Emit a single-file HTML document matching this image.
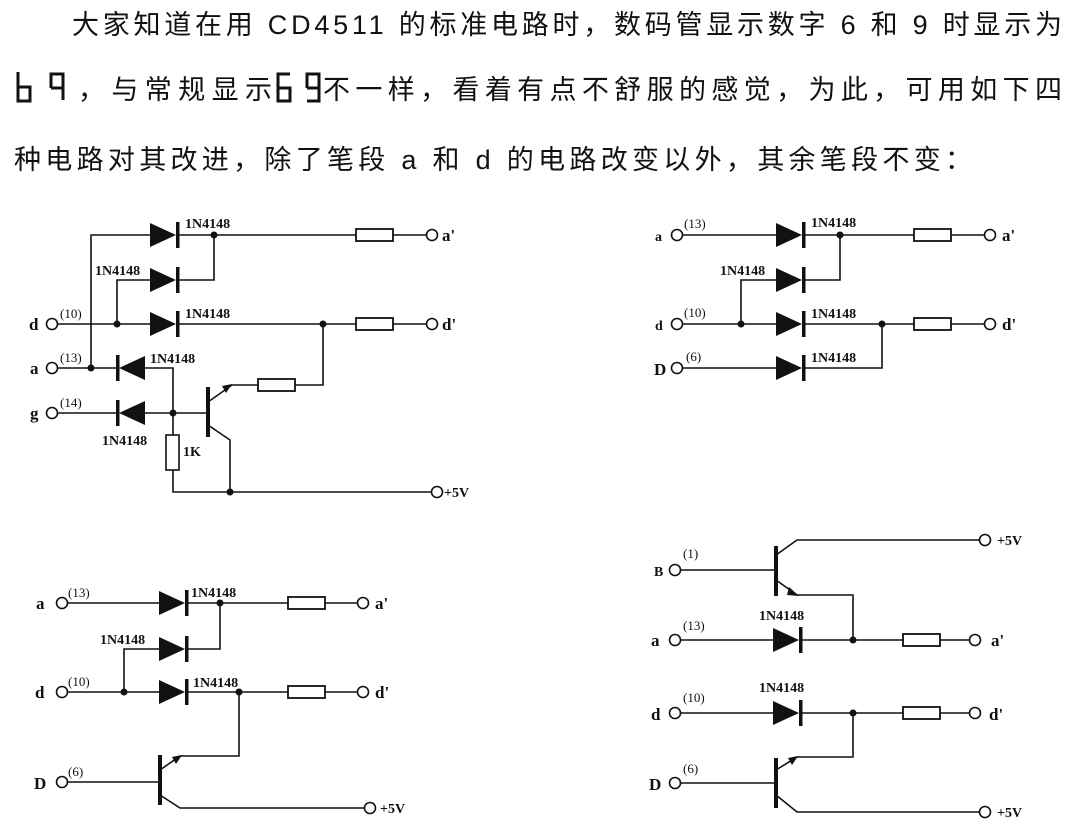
<!DOCTYPE html>
<html><head><meta charset="utf-8"><style>
html,body{margin:0;padding:0;background:#fff;width:1070px;height:835px;overflow:hidden}
svg{display:block}
.t{font-family:"Liberation Sans","Noto Sans CJK SC",sans-serif;font-size:27px;fill:#111}
.l{font-family:"Liberation Serif",serif;font-size:14px;font-weight:bold;fill:#111}
.b{font-family:"Liberation Serif",serif;font-size:17px;font-weight:bold;fill:#111}
.s{font-family:"Liberation Serif",serif;font-size:13px;fill:#111}
.w{stroke:#111;stroke-width:1.6;fill:none}
.seg{stroke:#111;stroke-width:3;fill:none}
</style></head><body>
<svg width="1070" height="835" viewBox="0 0 1070 835" xmlns="http://www.w3.org/2000/svg">
<defs>
<g id="dr"><polygon points="0,-12 26,0 0,12" fill="#111"/><rect x="26" y="-13" width="3.5" height="26" fill="#111"/></g>
<g id="dl"><polygon points="29,-12 3,0 29,12" fill="#111"/><rect x="0" y="-13" width="3.5" height="26" fill="#111"/></g>
<g id="r"><rect x="0" y="-6" width="37" height="12" fill="#fff" stroke="#111" stroke-width="1.8"/></g>
<g id="o"><circle cx="0" cy="0" r="5.5" fill="#fff" stroke="#111" stroke-width="1.6"/></g>
</defs>

<text class="t" x="72" y="34" textLength="990" lengthAdjust="spacing">大家知道在用 CD4511 的标准电路时，数码管显示数字 6 和 9 时显示为</text>
<path class="seg" d="M18,72 V101 H30 V87 H18"/>
<path class="seg" d="M51,88 V74 H63 V100 M51,88 H63"/>
<text class="t" x="78" y="99" textLength="194" lengthAdjust="spacing">，与常规显示</text>
<path class="seg" d="M290,74 H278 V101 H290 V88 H278"/>
<path class="seg" d="M307,88 V74 H319 V101 H307 M307,88 H319"/>
<text class="t" x="323" y="99" textLength="739" lengthAdjust="spacing">不一样，看着有点不舒服的感觉，为此，可用如下四</text>
<text class="t" x="14" y="169" textLength="958" lengthAdjust="spacing">种电路对其改进，除了笔段 a 和 d 的电路改变以外，其余笔段不变：</text>

<!-- Circuit 1 -->
<g class="w">
<path d="M91,368 V235 H150 M179,235 H356 M393,235 H427"/>
<path d="M117,324 V280 H150 M179,280 H214 V235"/>
<path d="M57,324 H150 M179,324 H356 M393,324 H427"/>
<path d="M57,368 H116 M145,368 H173 V435 M173,470 V492 H432"/>
<path d="M57,413 H116 M145,413 H208"/>
<path d="M323,324 V385 H294 M258,385 H232 L208,402"/>
<path d="M208,425 L230,440 V492"/>
</g>
<rect x="206" y="387" width="4" height="50" fill="#111"/>
<polygon points="232,384 222,386 226,393" fill="#111"/>
<rect x="166" y="435" width="13" height="35" fill="#fff" stroke="#111" stroke-width="1.6"/>
<use href="#dr" x="150" y="235"/><use href="#dr" x="150" y="280"/><use href="#dr" x="150" y="324"/>
<use href="#dl" x="116" y="368"/><use href="#dl" x="116" y="413"/>
<use href="#r" x="356" y="235"/><use href="#r" x="356" y="324"/><use href="#r" x="258" y="385"/>
<use href="#o" x="432" y="235"/><use href="#o" x="432" y="324"/><use href="#o" x="52" y="324"/><use href="#o" x="52" y="368"/><use href="#o" x="52" y="413"/><use href="#o" x="437" y="492"/>
<g fill="#111"><circle cx="214" cy="235" r="3.5"/><circle cx="117" cy="324" r="3.5"/><circle cx="323" cy="324" r="3.5"/><circle cx="91" cy="368" r="3.5"/><circle cx="173" cy="413" r="3.5"/><circle cx="230" cy="492" r="3.5"/></g>
<text class="l" x="185" y="228">1N4148</text><text class="l" x="95" y="275">1N4148</text><text class="l" x="185" y="318">1N4148</text><text class="l" x="150" y="363">1N4148</text><text class="l" x="102" y="445">1N4148</text><text class="l" x="183" y="456">1K</text>
<text class="b" x="442" y="241">a'</text><text class="b" x="442" y="330">d'</text><text class="l" x="444" y="497">+5V</text>
<text class="b" x="29" y="330">d</text><text class="b" x="30" y="374">a</text><text class="b" x="30" y="419">g</text>
<text class="s" x="60" y="318">(10)</text><text class="s" x="60" y="362">(13)</text><text class="s" x="60" y="407">(14)</text>

<!-- Circuit 2 -->
<g class="w">
<path d="M682,235 H776 M805,235 H914 M950,235 H985"/>
<path d="M741,324 V280 H776 M805,280 H840 V235"/>
<path d="M682,324 H776 M805,324 H914 M950,324 H985"/>
<path d="M682,368 H776 M805,368 H882 V324"/>
</g>
<use href="#dr" x="776" y="235"/><use href="#dr" x="776" y="280"/><use href="#dr" x="776" y="324"/><use href="#dr" x="776" y="368"/>
<use href="#r" x="914" y="235"/><use href="#r" x="914" y="324"/>
<use href="#o" x="677" y="235"/><use href="#o" x="677" y="324"/><use href="#o" x="677" y="368"/><use href="#o" x="990" y="235"/><use href="#o" x="990" y="324"/>
<g fill="#111"><circle cx="840" cy="235" r="3.5"/><circle cx="741" cy="324" r="3.5"/><circle cx="882" cy="324" r="3.5"/></g>
<text class="l" x="811" y="227">1N4148</text><text class="l" x="720" y="275">1N4148</text><text class="l" x="811" y="318">1N4148</text><text class="l" x="811" y="362">1N4148</text>
<text class="l" x="655" y="241">a</text><text class="l" x="655" y="330">d</text><text class="b" x="654" y="375">D</text>
<text class="s" x="684" y="228">(13)</text><text class="s" x="684" y="317">(10)</text><text class="s" x="686" y="361">(6)</text>
<text class="b" x="1002" y="241">a'</text><text class="b" x="1002" y="330">d'</text>

<!-- Circuit 3 -->
<g class="w">
<path d="M67,603 H159 M188,603 H288 M324,603 H358"/>
<path d="M124,692 V649 H159 M188,649 H220 V603"/>
<path d="M67,692 H159 M188,692 H288 M324,692 H358"/>
<path d="M67,782 H160 M160,770 L180,756 H239 V692 M160,795 L180,808 H365"/>
</g>
<rect x="158" y="755" width="4" height="50" fill="#111"/>
<polygon points="182,755 172,757 176,764" fill="#111"/>
<use href="#dr" x="159" y="603"/><use href="#dr" x="159" y="649"/><use href="#dr" x="159" y="692"/>
<use href="#r" x="288" y="603"/><use href="#r" x="288" y="692"/>
<use href="#o" x="62" y="603"/><use href="#o" x="62" y="692"/><use href="#o" x="62" y="782"/><use href="#o" x="363" y="603"/><use href="#o" x="363" y="692"/><use href="#o" x="370" y="808"/>
<g fill="#111"><circle cx="220" cy="603" r="3.5"/><circle cx="124" cy="692" r="3.5"/><circle cx="239" cy="692" r="3.5"/></g>
<text class="l" x="191" y="597">1N4148</text><text class="l" x="100" y="644">1N4148</text><text class="l" x="193" y="687">1N4148</text>
<text class="b" x="36" y="609">a</text><text class="b" x="35" y="698">d</text><text class="b" x="34" y="789">D</text>
<text class="s" x="68" y="597">(13)</text><text class="s" x="68" y="686">(10)</text><text class="s" x="68" y="776">(6)</text>
<text class="b" x="375" y="609">a'</text><text class="b" x="375" y="698">d'</text><text class="l" x="380" y="813">+5V</text>

<!-- Circuit 4 -->
<g class="w">
<path d="M776,555 L797,540 H980"/>
<path d="M680,570 H776"/>
<path d="M776,580 L797,595 H853 V640"/>
<path d="M680,640 H773 M802,640 H903 M938,640 H970"/>
<path d="M680,713 H773 M802,713 H903 M938,713 H970"/>
<path d="M853,713 V757 H797 L776,770"/>
<path d="M680,783 H776 M776,795 L797,812 H980"/>
</g>
<rect x="774" y="546" width="4" height="50" fill="#111"/>
<rect x="774" y="758" width="4" height="50" fill="#111"/>
<polygon points="799,596 789,587 787,595" fill="#111"/>
<polygon points="798,756 788,758 792,765" fill="#111"/>
<use href="#dr" x="773" y="640"/><use href="#dr" x="773" y="713"/>
<use href="#r" x="903" y="640"/><use href="#r" x="903" y="713"/>
<use href="#o" x="675" y="570"/><use href="#o" x="675" y="640"/><use href="#o" x="675" y="713"/><use href="#o" x="675" y="783"/>
<use href="#o" x="985" y="540"/><use href="#o" x="975" y="640"/><use href="#o" x="975" y="713"/><use href="#o" x="985" y="812"/>
<g fill="#111"><circle cx="853" cy="640" r="3.5"/><circle cx="853" cy="713" r="3.5"/></g>
<text class="l" x="759" y="620">1N4148</text><text class="l" x="759" y="692">1N4148</text>
<text class="l" x="654" y="576">B</text><text class="b" x="651" y="646">a</text><text class="b" x="651" y="720">d</text><text class="b" x="649" y="790">D</text>
<text class="s" x="683" y="558">(1)</text><text class="s" x="683" y="630">(13)</text><text class="s" x="683" y="702">(10)</text><text class="s" x="683" y="773">(6)</text>
<text class="b" x="991" y="646">a'</text><text class="b" x="989" y="720">d'</text><text class="l" x="997" y="545">+5V</text><text class="l" x="997" y="817">+5V</text>
</svg>
</body></html>
